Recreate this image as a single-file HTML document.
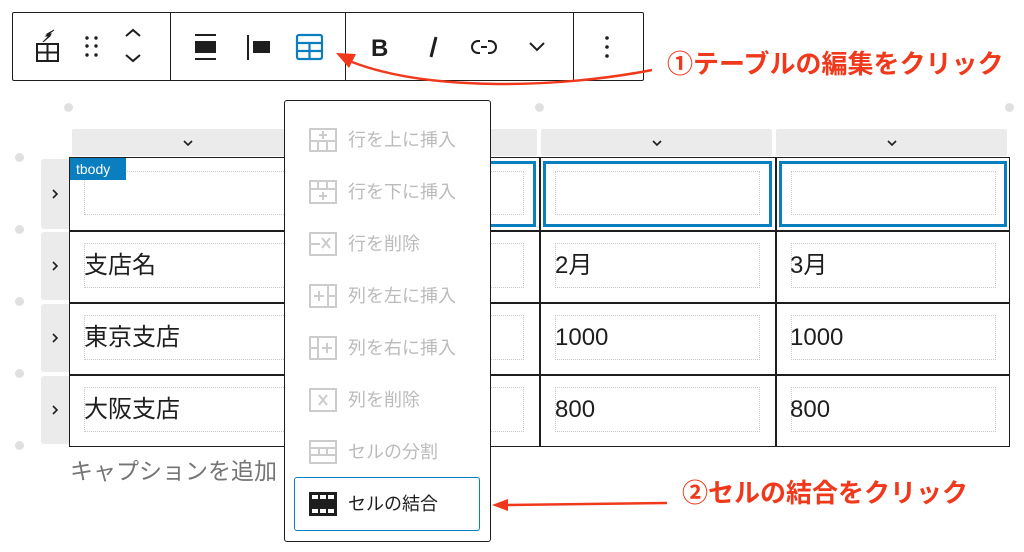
<!DOCTYPE html>
<html><head><meta charset="utf-8"><style>
*{margin:0;padding:0;box-sizing:border-box}
body{width:1024px;height:552px;background:#fff;position:relative;overflow:hidden;font-family:"Liberation Sans","Noto Sans CJK JP",sans-serif;color:#1e1e1e}
.a{position:absolute}
.dot{position:absolute;width:9px;height:9px;border-radius:50%;background:#e0e0e0}
.hdr{position:absolute;top:129px;height:27px;background:#ebebeb;border-radius:2px}
.hdr svg{position:absolute;left:50%;top:10px;margin-left:-6px}
.rh{position:absolute;left:41px;width:28px;background:#ebebeb;border-radius:3px 0 0 3px}
.rh svg{position:absolute;left:10px;top:50%;margin-top:-6px}
.inner{position:absolute;border:1px dotted #c8c8c8}
.ct{position:absolute;font-size:24px;color:#1e1e1e;line-height:30px}
.mi{position:absolute;left:308px;font-size:18px;color:#bbb;height:30px;line-height:30px;padding-left:40px;white-space:nowrap}
.mi svg{position:absolute;left:0;top:2px}
.red{color:#f0391c;font-weight:bold;font-size:26px;position:absolute;white-space:nowrap;line-height:32px}
</style></head><body>
<!-- toolbar -->
<div class="a" style="left:12px;top:12px;width:632px;height:69px;border:1px solid #1e1e1e;border-radius:2px"></div>
<div class="a" style="left:170px;top:13px;width:1px;height:67px;background:#1e1e1e"></div>
<div class="a" style="left:345px;top:13px;width:1px;height:67px;background:#1e1e1e"></div>
<div class="a" style="left:573px;top:13px;width:1px;height:67px;background:#1e1e1e"></div>
<svg class="a" style="left:0;top:0" width="660" height="90">
 <g fill="none" stroke="#1e1e1e" stroke-width="2">
  <rect x="37" y="44" width="21" height="17"/><line x1="37" y1="52.5" x2="58" y2="52.5"/><line x1="47.5" y1="44" x2="47.5" y2="61"/>
  <polyline points="126,36 133,30 140,36"/><polyline points="126,55 133,61 140,55"/>
  <line x1="195" y1="35" x2="216" y2="35"/><line x1="195" y1="59" x2="216" y2="59"/>
  <line x1="248" y1="35" x2="248" y2="60"/>
  <polyline points="530,43 537,50 544,43"/>
 </g>
 <path d="M43 42 L50 36 L46 36 L54 30 L47 34 L51 34 Z" fill="#1e1e1e" stroke="#1e1e1e" stroke-width="1"/>
 <g fill="#1e1e1e"><circle cx="87" cy="38" r="1.7"/><circle cx="96" cy="38" r="1.7"/><circle cx="87" cy="46" r="1.7"/><circle cx="96" cy="46" r="1.7"/><circle cx="87" cy="55" r="1.7"/><circle cx="96" cy="55" r="1.7"/>
 <rect x="195" y="41" width="21" height="12"/><rect x="253" y="41" width="17" height="12"/>
 <circle cx="607" cy="38" r="1.8"/><circle cx="607" cy="47" r="1.8"/><circle cx="607" cy="56" r="1.8"/></g>
 <g fill="none" stroke="#0a7ebf" stroke-width="2.2"><rect x="297" y="35" width="25" height="24" rx="2"/><line x1="297" y1="43" x2="322" y2="43"/><line x1="297" y1="51" x2="322" y2="51"/><line x1="309.5" y1="43" x2="309.5" y2="59"/></g>
 <text x="371" y="56" font-family="Liberation Sans" font-weight="bold" font-size="24" fill="#1e1e1e">B</text>
 <line x1="436" y1="37" x2="431" y2="57" stroke="#1e1e1e" stroke-width="3"/>
 <g fill="none" stroke="#1e1e1e" stroke-width="2"><path d="M480 41 h-2 a6 6 0 0 0 0 12 h2"/><path d="M488 41 h2 a6 6 0 0 1 0 12 h-2"/><line x1="481" y1="47" x2="487" y2="47"/></g>
</svg>
<!-- dots -->
<div class="dot" style="left:64px;top:103px"></div><div class="dot" style="left:535px;top:103px"></div><div class="dot" style="left:1005px;top:103px"></div>
<div class="dot" style="left:15px;top:153px"></div><div class="dot" style="left:15px;top:225px"></div><div class="dot" style="left:15px;top:297px"></div><div class="dot" style="left:15px;top:369px"></div><div class="dot" style="left:15px;top:441px"></div>
<!-- headers -->
<div class="hdr" style="left:72px;width:231px"><svg width="12" height="8"><polyline points="2,2 6,6 10,2" fill="none" stroke="#1e1e1e" stroke-width="1.6"/></svg></div>
<div class="hdr" style="left:307px;width:230px"><svg width="12" height="8"><polyline points="2,2 6,6 10,2" fill="none" stroke="#1e1e1e" stroke-width="1.6"/></svg></div>
<div class="hdr" style="left:541px;width:231px"><svg width="12" height="8"><polyline points="2,2 6,6 10,2" fill="none" stroke="#1e1e1e" stroke-width="1.6"/></svg></div>
<div class="hdr" style="left:776px;width:231px"><svg width="12" height="8"><polyline points="2,2 6,6 10,2" fill="none" stroke="#1e1e1e" stroke-width="1.6"/></svg></div>
<!-- row handles -->
<div class="rh" style="top:159px;height:70px"><svg width="8" height="12"><polyline points="2,2 6,6 2,10" fill="none" stroke="#1e1e1e" stroke-width="1.6"/></svg></div>
<div class="rh" style="top:232px;height:68px"><svg width="8" height="12"><polyline points="2,2 6,6 2,10" fill="none" stroke="#1e1e1e" stroke-width="1.6"/></svg></div>
<div class="rh" style="top:304px;height:68px"><svg width="8" height="12"><polyline points="2,2 6,6 2,10" fill="none" stroke="#1e1e1e" stroke-width="1.6"/></svg></div>
<div class="rh" style="top:376px;height:68px"><svg width="8" height="12"><polyline points="2,2 6,6 2,10" fill="none" stroke="#1e1e1e" stroke-width="1.6"/></svg></div>
<!-- table -->
<div class="a" style="left:69px;top:157px;width:941px;height:290px;border:1.5px solid #1e1e1e"></div>
<div class="a" style="left:69px;top:230px;width:941px;height:1.5px;background:#1e1e1e"></div>
<div class="a" style="left:69px;top:302px;width:941px;height:1.5px;background:#1e1e1e"></div>
<div class="a" style="left:69px;top:374px;width:941px;height:1.5px;background:#1e1e1e"></div>
<div class="a" style="left:304px;top:157px;width:1.5px;height:290px;background:#1e1e1e"></div>
<div class="a" style="left:539px;top:157px;width:1.5px;height:290px;background:#1e1e1e"></div>
<div class="a" style="left:775px;top:157px;width:1.5px;height:290px;background:#1e1e1e"></div>
<!-- selected cells -->
<div class="a" style="left:308px;top:161px;width:228px;height:66px;border:3px solid #0a7ebf"></div>
<div class="a" style="left:543px;top:161px;width:229px;height:66px;border:3px solid #0a7ebf"></div>
<div class="a" style="left:779px;top:161px;width:228px;height:66px;border:3px solid #0a7ebf"></div>
<!-- inner dotted -->
<div class="inner" style="left:84px;top:171px;width:210px;height:44px"></div>
<div class="inner" style="left:320px;top:171px;width:204px;height:44px"></div>
<div class="inner" style="left:555px;top:171px;width:205px;height:44px"></div>
<div class="inner" style="left:791px;top:171px;width:205px;height:44px"></div>
<div class="inner" style="left:84px;top:243px;width:210px;height:45px"></div><div class="inner" style="left:320px;top:243px;width:204px;height:45px"></div><div class="inner" style="left:555px;top:243px;width:205px;height:45px"></div><div class="inner" style="left:791px;top:243px;width:205px;height:45px"></div>
<div class="inner" style="left:84px;top:315px;width:210px;height:45px"></div><div class="inner" style="left:320px;top:315px;width:204px;height:45px"></div><div class="inner" style="left:555px;top:315px;width:205px;height:45px"></div><div class="inner" style="left:791px;top:315px;width:205px;height:45px"></div>
<div class="inner" style="left:84px;top:387px;width:210px;height:45px"></div><div class="inner" style="left:320px;top:387px;width:204px;height:45px"></div><div class="inner" style="left:555px;top:387px;width:205px;height:45px"></div><div class="inner" style="left:791px;top:387px;width:205px;height:45px"></div>
<div class="a" style="left:70px;top:158px;width:56px;height:22px;background:#0a7ebf;color:#fff;font-size:14px;padding-left:6px;line-height:22px">tbody</div>
<div class="ct" style="left:84px;top:251px">支店名</div>
<div class="ct" style="left:84px;top:323px">東京支店</div>
<div class="ct" style="left:84px;top:395px">大阪支店</div>
<div class="ct" style="left:555px;top:251px">2月</div><div class="ct" style="left:790px;top:251px">3月</div>
<div class="ct" style="left:555px;top:323px">1000</div><div class="ct" style="left:790px;top:323px">1000</div>
<div class="ct" style="left:555px;top:395px">800</div><div class="ct" style="left:790px;top:395px">800</div>
<div class="a" style="left:70px;top:452px;font-size:23px;color:#757575;white-space:nowrap">キャプションを追加</div>
<!-- menu -->
<div class="a" style="left:284px;top:100px;width:207px;height:442px;background:#fff;border:1px solid #1e1e1e;border-radius:3px"></div>
<div class="mi" style="top:125px"><svg width="30" height="26"><g fill="none" stroke="#ccc" stroke-width="2"><rect x="2" y="2" width="26" height="22"/><line x1="2" y1="14" x2="28" y2="14"/><line x1="10" y1="14" x2="10" y2="24"/><line x1="19" y1="14" x2="19" y2="24"/><line x1="15" y1="4" x2="15" y2="12"/><line x1="11" y1="8" x2="19" y2="8"/></g></svg>行を上に挿入</div>
<div class="mi" style="top:177px"><svg width="30" height="26"><g fill="none" stroke="#ccc" stroke-width="2"><rect x="2" y="2" width="26" height="22"/><line x1="2" y1="10" x2="28" y2="10"/><line x1="10" y1="2" x2="10" y2="10"/><line x1="19" y1="2" x2="19" y2="10"/><line x1="15" y1="13" x2="15" y2="21"/><line x1="11" y1="17" x2="19" y2="17"/></g></svg>行を下に挿入</div>
<div class="mi" style="top:229px"><svg width="30" height="26"><g fill="none" stroke="#ccc" stroke-width="2"><rect x="2" y="2" width="26" height="22"/><line x1="2" y1="13" x2="12" y2="13"/><line x1="14" y1="7" x2="22" y2="17"/><line x1="22" y1="7" x2="14" y2="17"/></g></svg>行を削除</div>
<div class="mi" style="top:281px"><svg width="30" height="26"><g fill="none" stroke="#ccc" stroke-width="2"><rect x="2" y="2" width="26" height="22"/><line x1="20" y1="2" x2="20" y2="24"/><line x1="20" y1="13" x2="28" y2="13"/><line x1="11" y1="8" x2="11" y2="18"/><line x1="6" y1="13" x2="16" y2="13"/></g></svg>列を左に挿入</div>
<div class="mi" style="top:333px"><svg width="30" height="26"><g fill="none" stroke="#ccc" stroke-width="2"><rect x="2" y="2" width="26" height="22"/><line x1="10" y1="2" x2="10" y2="24"/><line x1="2" y1="13" x2="10" y2="13"/><line x1="19" y1="8" x2="19" y2="18"/><line x1="14" y1="13" x2="24" y2="13"/></g></svg>列を右に挿入</div>
<div class="mi" style="top:385px"><svg width="30" height="26"><g fill="none" stroke="#ccc" stroke-width="2"><rect x="2" y="2" width="26" height="22"/><line x1="11" y1="8" x2="19" y2="18"/><line x1="19" y1="8" x2="11" y2="18"/></g></svg>列を削除</div>
<div class="mi" style="top:437px"><svg width="30" height="26"><g fill="none" stroke="#ccc" stroke-width="2"><rect x="2" y="2" width="26" height="22"/><line x1="2" y1="9" x2="28" y2="9"/><line x1="2" y1="16" x2="28" y2="16"/><line x1="11" y1="9" x2="11" y2="16"/><line x1="19" y1="9" x2="19" y2="16"/></g></svg>セルの分割</div>
<div class="a" style="left:294px;top:477px;width:186px;height:54px;border:1.5px solid #0a7ebf;border-radius:3px"></div>
<div class="mi" style="top:489px;color:#1e1e1e"><svg width="30" height="26"><rect x="1" y="1" width="28" height="24" fill="#1e1e1e"/><g fill="#fff"><rect x="4" y="4" width="6" height="4"/><rect x="12" y="4" width="6" height="4"/><rect x="20" y="4" width="6" height="4"/><rect x="4" y="18" width="6" height="4"/><rect x="12" y="18" width="6" height="4"/><rect x="20" y="18" width="6" height="4"/></g></svg>セルの結合</div>
<!-- annotations -->
<svg class="a" style="left:0;top:0" width="1024" height="552">
 <path d="M652 70 C560 88 430 92 352 62" fill="none" stroke="#f0391c" stroke-width="2.5"/>
 <polygon points="336,53 356,54 349,68" fill="#f0391c"/>
 <line x1="667" y1="503" x2="505" y2="505" stroke="#f0391c" stroke-width="2.5"/>
 <polygon points="492,505 508,499 508,511" fill="#f0391c"/>
</svg>
<div class="red" style="left:667px;top:48px">①テーブルの編集をクリック</div>
<div class="red" style="left:682px;top:477px">②セルの結合をクリック</div>
</body></html>
